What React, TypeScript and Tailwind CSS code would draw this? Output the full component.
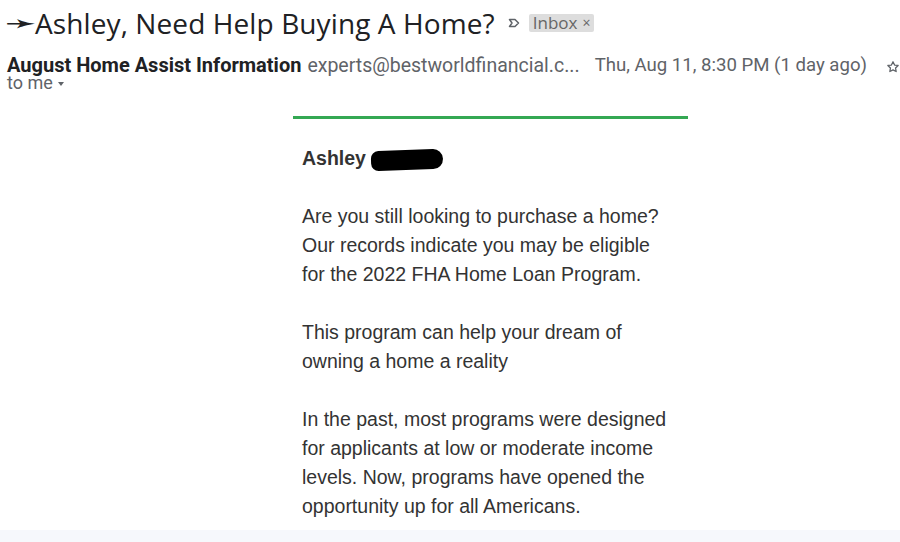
const paragraphs: string[][] = [
    ["Are you still looking to purchase a home?", "Our records indicate you may be eligible", "for the 2022 FHA Home Loan Program."],
    ["This program can help your dream of", "owning a home a reality"],
    [
        "In the past, most programs were designed",
        "for applicants at low or moderate income",
        "levels. Now, programs have opened the",
        "opportunity up for all Americans.",
    ],
];

const ImportantMark = () => (
    <svg width="12" height="10" viewBox="0 0 12 10" className="ml-[13px] mr-[9px] mt-[1px]">
        <path d="M1.5 1.5 H7 L10.5 5 L7 8.5 H1.5 L4 5 Z" fill="none" stroke="#5f6368" strokeWidth="1.5" strokeLinejoin="round" />
    </svg>
);

const Star = () => (
    <svg width="14" height="14" viewBox="0 0 24 24" fill="none" stroke="#5f6368" strokeWidth="2.2" strokeLinejoin="round">
        <path d="M12 3l2.7 5.6 6.1.8-4.4 4.3 1 6.1L12 17l-5.4 2.8 1-6.1L3.2 9.4l6.1-.8z" />
    </svg>
);

const App = () => {
    return (
        <div className="w-[900px] h-[542px] overflow-hidden bg-white flex flex-col font-['Roboto',sans-serif]">
            <div className="flex items-center h-[44px] pl-[5px] pt-[1px]">
                <span className="inline-block w-[30px] text-[26px] leading-none text-[#202124] font-['DejaVu_Sans',sans-serif] scale-x-[1.45] origin-left">
                    ➛
                </span>
                <h1 className="text-[28px] leading-none text-[#202124] font-['Open_Sans',sans-serif] tracking-[0.1px]">
                    Ashley, Need Help Buying A Home?
                </h1>
                <ImportantMark />
                <span className="flex items-center h-[18px] bg-[#dddddd] text-[#666666] text-[17px] px-[4px] rounded-[2px] font-['Open_Sans',sans-serif]">
                    Inbox<span className="ml-[5px] text-[14px]">×</span>
                </span>
            </div>

            <div className="flex items-start pl-[7px] pt-[12px] leading-[18px]">
                <div className="flex flex-col">
                    <div className="flex items-baseline whitespace-nowrap">
                        <span className="text-[20px] font-bold text-[#202124]">August Home Assist Information</span>
                        <span className="text-[19.5px] text-[#5f6368] ml-[6px]">experts@bestworldfinancial.c...</span>
                    </div>
                    <div className="flex items-center text-[18px] text-[#5f6368] mt-[-1px]">
                        to me
                        <span className="ml-[5px] mt-[2px] border-x-[3px] border-t-[4px] border-x-transparent border-t-[#5f6368]" />
                    </div>
                </div>
                <span className="ml-[15px] text-[18.6px] text-[#5f6368] whitespace-nowrap">Thu, Aug 11, 8:30 PM (1 day ago)</span>
                <span className="ml-[19px] mt-[4px]">
                    <Star />
                </span>
            </div>

            <div className="flex-1 pl-[293px] pt-[24px]">
                <div className="w-[395px] border-t-[3px] border-[#34a853] px-[9px] pt-[25px] font-['Liberation_Sans',Arial,sans-serif] text-[19.5px] leading-[29px] text-[#333333]">
                    <div className="flex items-center font-bold">
                        Ashley
                        <span className="ml-[5px] mt-[2px] w-[72px] h-[20px] bg-black rounded-l-[9px] rounded-r-[12px] -rotate-[2deg]" />
                    </div>
                    {paragraphs.map((p, i) => (
                        <p key={i} className="mt-[29px]">
                            {p.map((line, j) => (
                                <span key={j} className="block whitespace-nowrap">
                                    {line}
                                </span>
                            ))}
                        </p>
                    ))}
                </div>
            </div>

            <div className="h-[12px] shrink-0 bg-[#f6f8fc]" />
        </div>
    );
};

export default App;
